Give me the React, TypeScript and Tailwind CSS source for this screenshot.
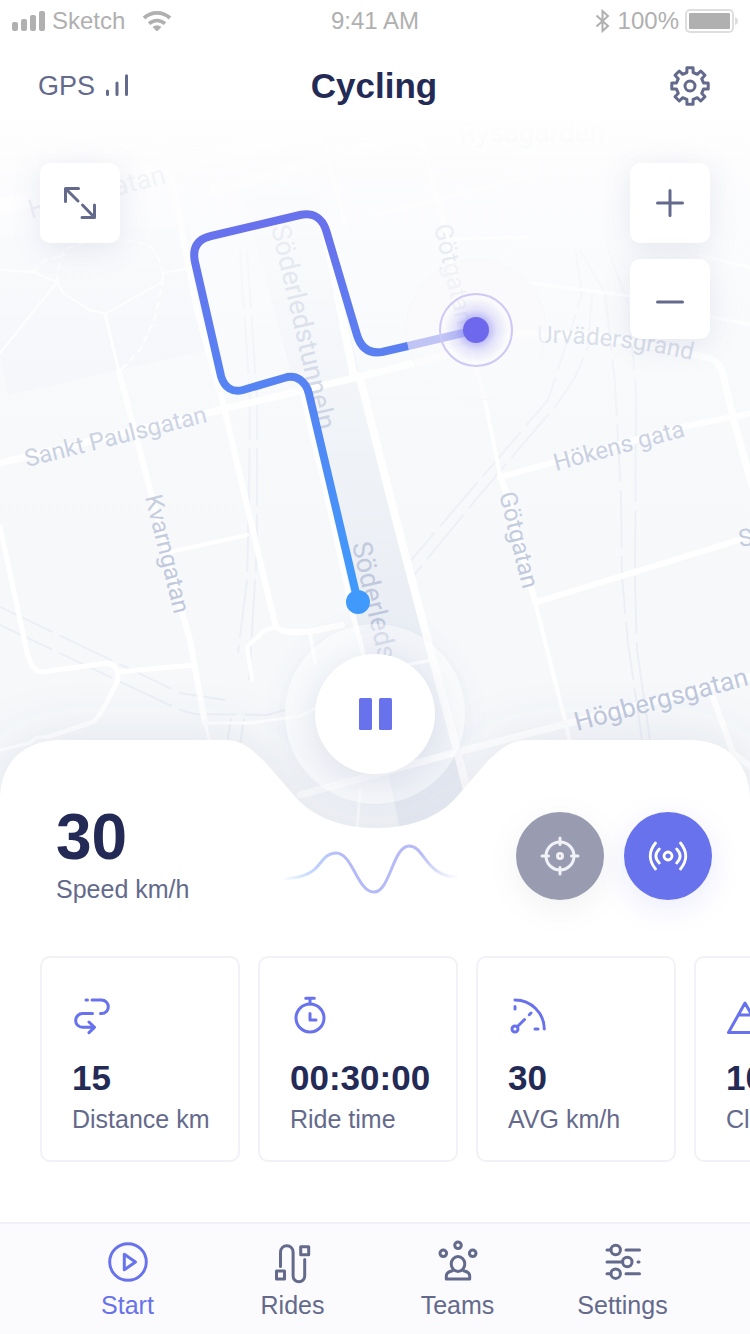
import React, { useState } from 'react';

const roads = [
  { w: 7, d: 'M0 463L207 413L375 373L438 357L518 333L600 336L688 353L712 359Q720 364 723 374L733 417L752 486' },
  { w: 6, d: 'M752 413L732 417L682 427L500 477' },
  { w: 4, d: 'M472 353L485 400L500 475' },
  { w: 6, d: 'M500 475L507 495L535 602' },
  { w: 4, d: 'M535 602L565 720L570 742' },
  { w: 5, d: 'M415 118L442 217L472 353' },
  { w: 6, d: 'M537 602L752 536' },
  { w: 7, d: 'M300 795L402 767L465 750L573 722L752 676' },
  { w: 6, d: 'M713 697L733 753L752 768' },
  { w: 8, d: 'M325 230L353 373L360 378L391 500L410 573L433 660L457 750L467 790' },
  { w: 5, d: 'M302 393L327 497L353 615L366 665' },
  { w: 6, d: 'M168 160L197 310L223 403L245 497L275 624Q278 632 290 632L308 632L342 625' },
  { w: 4, d: 'M273 628Q262 630 258 637L247 647L252 680M310 633L315 662M170 552L247 535' },
  { w: 3, d: 'M105 314L119 372' },
  { w: 6, d: 'M119 372L122 383L152 497L182 613L190 640L205 723' },
  { w: 5, d: 'M0 527L25 643Q30 672 42 672L107 663Q118 664 118 680Q100 718 93 722L48 737' },
  { w: 5, d: 'M118 672L193 665' },
  { w: 3, d: 'M0 750L30 743L37 737L48 737M203 723L250 723L300 716L400 666L433 660M205 723L210 742' },
  { w: 2, d: 'M0 270L33 272L57 282L63 293L90 310L105 314L162 282L163 273L190 268M57 282L0 353' },
  { w: 16, d: 'M0 207L180 163L375 118' },
  { w: 10, d: 'M215 190L750 40' },
  { w: 3, d: 'M0 204L180 158M22 118L38 170M155 118L165 158M325 150L345 225M375 215L530 176M445 239L527 237M530 283L630 296M700 255L752 268M700 315L752 325M360 790L357 830' },
];

const rails = [
  'M240 250L250 397L249 497L247 580L238 653',
  'M247 250L257 397L257 550L249 680',
  'M605 293L615 383L621 497L622 577L628 643L642 740',
  'M608 250L628 303L636 390L635 583L637 650L650 740',
  'M575 250L582 293L573 323L548 400L465 497L407 565L360 625',
  'M580 250L605 293M592 293L588 347L575 377L558 403L478 497L410 580L360 640',
  'M0 607L180 693L225 700M0 625L180 710L195 714L267 715L285 710',
  'M231 718L227 745M244 718L240 745',
];

const labels = [
  { text: 'Hornsgatan', x: 31, y: 219, angle: -15, size: 27 },
  { text: 'Ryssgården', x: 459, y: 142, angle: 0, size: 28 },
  { text: 'Söderledstunneln', x: 271, y: 227, angle: 77, size: 27 },
  { text: 'Götgatan', x: 434, y: 226, angle: 77, size: 25 },
  { text: 'Sankt Paulsgatan', x: 27, y: 467, angle: -14, size: 24 },
  { text: 'Hökens gata', x: 556, y: 471, angle: -15, size: 24 },
  { text: 'Kvarngatan', x: 145, y: 497, angle: 76, size: 24 },
  { text: 'Götgatan', x: 499, y: 494, angle: 76, size: 24 },
  { text: 'Söderleds', x: 352, y: 544, angle: 77, size: 27 },
  { text: 'Högbergsgatan', x: 577, y: 731, angle: -15, size: 26 },
  { text: 'S', x: 740, y: 547, angle: -10, size: 24 },
];

const route =
  'M358 602L309 394C306 381 296 374 284 378L243 390C232 393 224 387 221 376L195 262C192 248 197 239 211 236L300 215C313 212 322 218 326 230L357 335C361 348 369 354 382 352L408 346';

const sheet =
  'M0 800C0 762 25 740 60 740H225C243 740 254 751 266 763L298 800C318 820 346 828 376 828C406 828 434 820 454 800L486 763C498 751 509 740 527 740H690C725 740 750 762 750 800V900H0Z';

function CityMap() {
  return (
    <svg
      className="absolute inset-0 h-full w-full"
      viewBox="0 118 750 712"
      preserveAspectRatio="xMidYMin slice"
      fill="none"
      aria-hidden="true"
    >
      <defs>
        <linearGradient id="fade" x1="0" y1="118" x2="0" y2="600" gradientUnits="userSpaceOnUse">
          <stop offset="0" stopColor="#fdfdfe" stopOpacity="0.94" />
          <stop offset="0.2" stopColor="#fdfdfe" stopOpacity="0.76" />
          <stop offset="0.45" stopColor="#fcfdfd" stopOpacity="0.44" />
          <stop offset="0.7" stopColor="#fbfcfc" stopOpacity="0.16" />
          <stop offset="1" stopColor="#fbfcfc" stopOpacity="0" />
        </linearGradient>
        <linearGradient id="top" x1="0" y1="118" x2="0" y2="170" gradientUnits="userSpaceOnUse">
          <stop offset="0" stopColor="#fff" stopOpacity="0.8" />
          <stop offset="1" stopColor="#fff" stopOpacity="0" />
        </linearGradient>
        <linearGradient id="tunnel" x1="0" y1="180" x2="0" y2="560" gradientUnits="userSpaceOnUse">
          <stop offset="0" stopColor="#f3f5f9" />
          <stop offset="1" stopColor="#ebeff5" />
        </linearGradient>
        <linearGradient id="route" x1="0" y1="230" x2="0" y2="590" gradientUnits="userSpaceOnUse">
          <stop offset="0" stopColor="#6872ed" />
          <stop offset="1" stopColor="#3f9afb" />
        </linearGradient>
        <radialGradient id="glow">
          <stop offset="0.3" stopColor="#6c66ee" stopOpacity="0.5" />
          <stop offset="0.65" stopColor="#6c66ee" stopOpacity="0.15" />
          <stop offset="1" stopColor="#6c66ee" stopOpacity="0" />
        </radialGradient>
        <filter id="soft" x="-20%" y="-60%" width="140%" height="220%">
          <feGaussianBlur stdDeviation="28" />
        </filter>
        <path id="urvaders" d="M537 343Q620 342 700 362" />
      </defs>

      <rect y="118" width="750" height="712" fill="#f6f8fa" />
      <path d="M0 235L190 225L208 350L8 395L0 355Z" fill="#f2f4f9" />
      <path d="M240 190L315 180L360 375L391 500L433 660L475 830L400 830L366 665L327 497L302 393L290 370L258 250Z" fill="url(#tunnel)" />
      {rails.map((d) => (
        <path key={d} d={d} stroke="#eceff6" strokeWidth="2" strokeDasharray="58 8" />
      ))}
      {roads.map(({ w, d }) => (
        <path key={d} d={d} stroke="#fff" strokeWidth={w} strokeLinejoin="round" strokeLinecap="round" />
      ))}
      <path
        d="M57 282L60 257L68 248Q110 232 150 246Q163 260 163 282L155 318L140 350L119 372M33 272L45 260L65 255"
        stroke="#fff"
        strokeWidth="2"
        strokeDasharray="8 4"
      />

      <g fill="#bfc8dc" fontFamily="Roboto, 'Liberation Sans', sans-serif">
        {labels.map(({ text, x, y, angle, size }) => (
          <text key={`${text}-${y}`} transform={`translate(${x} ${y}) rotate(${angle})`} fontSize={size}>
            {text}
          </text>
        ))}
        <text fontSize="24">
          <textPath href="#urvaders">Urvädersgränd</textPath>
        </text>
      </g>
      <rect y="118" width="750" height="712" fill="url(#fade)" />
      <rect y="118" width="750" height="60" fill="url(#top)" />

      <circle cx="476" cy="330" r="70" fill="#fafafc" fillOpacity="0.6" stroke="#f8f8fb" />
      <circle cx="476" cy="330" r="32" fill="url(#glow)" />
      <path d="M408 346L476 330" stroke="#6872ed" strokeOpacity="0.4" strokeWidth="8" />
      <circle cx="476" cy="330" r="36" stroke="#cdc8f6" strokeWidth="2" />
      <circle cx="476" cy="330" r="13" fill="#6e69ec" />
      <path d={route} stroke="url(#route)" strokeWidth="8" />
      <circle cx="358" cy="602" r="12" fill="#3f9afb" />

      <path d={sheet} fill="#5a6496" fillOpacity="0.14" filter="url(#soft)" />
      <path d={sheet} fill="#fff" />
    </svg>
  );
}

function StatusBar() {
  return (
    <div className="grid h-[42px] grid-cols-[1fr_auto_1fr] items-center px-3 text-2xl leading-8 text-[#b0b0b0]">
      <div className="flex items-center gap-[7px]">
        <svg width="33" height="20" fill="currentColor" aria-hidden="true">
          <rect y="11" width="6" height="9" rx="2" />
          <rect x="9" y="8" width="6" height="12" rx="2" />
          <rect x="18" y="4" width="6" height="16" rx="2" />
          <rect x="27" width="6" height="20" rx="2" />
        </svg>
        <span>Sketch</span>
        <svg className="ml-2.5" width="30" height="20" viewBox="0 0 30 20" aria-hidden="true">
          <g fill="none" stroke="currentColor" strokeWidth="3.8">
            <path d="M2 7C9.500 .2 20.500 .2 28 7" />
            <path d="M7 12.600C12 8.500 18 8.500 23 12.600" />
          </g>
          <path d="M10.500 16Q15 12.500 19.500 16L15 20.500Z" fill="currentColor" />
        </svg>
      </div>
      <span>9:41 AM</span>
      <div className="flex items-center justify-end">
        <svg className="mr-2" width="15" height="24" viewBox="0 0 15 24" fill="none" stroke="currentColor" strokeWidth="2" aria-hidden="true">
          <path d="M1.500 6.500L13 17L7.500 22V2L13 7L1.500 17.500" />
        </svg>
        <span>100%</span>
        <svg className="ml-1.5" width="53" height="24" viewBox="0 0 53 24" aria-hidden="true">
          <rect x="1" y="1" width="47" height="22" rx="4" fill="none" stroke="#dedede" strokeWidth="2" />
          <rect x="4" y="4" width="41" height="16" rx="1" fill="currentColor" />
          <path d="M50 8Q53 9 53 12T50 16Z" fill="#dedede" />
        </svg>
      </div>
    </div>
  );
}

function Header() {
  return (
    <header className="pt-3">
      <div className="grid h-16 grid-cols-[1fr_auto_1fr] items-center pr-10 pl-[38px]">
        <div className="flex items-center gap-2.5 text-[27px] leading-8 text-[#646a8b]">
          <span>GPS</span>
          <svg width="24" height="24" fill="none" stroke="currentColor" strokeWidth="3" strokeLinecap="round" aria-hidden="true">
            <path d="M2.500 17V20.500M12 9V20.500M21.500 1.800V20.500" />
          </svg>
        </div>
        <h1 className="text-[35px] leading-[44px] font-bold text-[#232a55]">Cycling</h1>
        <button type="button" aria-label="Preferences" className="justify-self-end text-[#646a8b]">
          <svg width="40" height="40" viewBox="-20 -20 40 40" fill="none" stroke="currentColor" strokeWidth="3" strokeLinejoin="round">
            <path d="M-3.100 -13.500V-18.200H3.100V-13.500L7.300 -11.700L10.700 -15L15 -10.700L11.700 -7.300L13.500 -3.100H18.200V3.100H13.500L11.700 7.300L15 10.700L10.700 15L7.300 11.700L3.100 13.500V18.200H-3.100V13.500L-7.300 11.700L-10.700 15L-15 10.700L-11.700 7.300L-13.500 3.100H-18.200V-3.100H-13.500L-11.700 -7.300L-15 -10.700L-10.700 -15L-7.300 -11.700Z" />
            <circle r="5" />
          </svg>
        </button>
      </div>
    </header>
  );
}

interface MapButtonProps {
  label: string;
  path: string;
}

function MapButton({ label, path }: MapButtonProps) {
  return (
    <button
      type="button"
      aria-label={label}
      className="flex size-20 items-center justify-center rounded-[10px] bg-white text-[#646a8b] shadow-[0_6px_30px_rgba(90,100,160,0.13)]"
    >
      <svg width="40" height="40" fill="none" stroke="currentColor" strokeWidth="3" strokeLinecap="round" strokeLinejoin="round">
        <path d={path} />
      </svg>
    </button>
  );
}

const stats = [
  {
    value: '15',
    label: 'Distance km',
    icon: (
      <path d="M14 4H15.500M20 4H29.500A6.800 6.800 0 0 1 29.500 17.600H28.500M20.500 17.600H10.500A6.800 6.800 0 0 0 10.500 31.300H22M17 26L22.500 31.300L17 36.600" />
    ),
  },
  {
    value: '00:30:00',
    label: 'Ride time',
    icon: (
      <>
        <circle cx="20" cy="22" r="14" />
        <path d="M15.700 2.200H24.300M20 2.200V8M20 17.500V24H26" />
      </>
    ),
  },
  {
    value: '30',
    label: 'AVG km/h',
    icon: (
      <>
        <path d="M7 4A29.300 29.300 0 0 1 36.300 33M9.500 30.500L16.500 23.500M7 10.500V13M21.300 18.700L23 17M27 33H30" />
        <circle cx="7" cy="33" r="3" />
      </>
    ),
  },
  {
    value: '100',
    label: 'Climb m',
    icon: <path d="M19 7L2.500 36.500H35.500ZM12.500 19H25.500" />,
  },
];

const tabs = [
  {
    name: 'Start',
    icon: (
      <>
        <circle cx="20" cy="20" r="18.300" />
        <path d="M16.300 12.300V27.700L27.500 20Z" />
      </>
    ),
  },
  {
    name: 'Rides',
    icon: (
      <>
        <path d="M3.500 29H11.500V37H3.500ZM27.700 4.700H35.700V12.700H27.700Z" />
        <path d="M7.500 24.500V10A6.300 6.300 0 0 1 20.100 10V34A5.800 5.800 0 0 0 31.700 34V17.500" />
      </>
    ),
  },
  {
    name: 'Teams',
    icon: (
      <>
        <circle cx="20" cy="3.300" r="3.300" />
        <circle cx="5.300" cy="11.300" r="3.300" />
        <circle cx="34.700" cy="11.300" r="3.300" />
        <ellipse cx="20" cy="22" rx="6.800" ry="7.600" />
        <path d="M14.500 28.700Q8.300 30 8.300 34V37H31.700V34Q31.700 30 25.500 28.700" />
      </>
    ),
  },
  {
    name: 'Settings',
    icon: (
      <>
        <circle cx="12.700" cy="8" r="4.700" />
        <circle cx="24.300" cy="20" r="4.700" />
        <circle cx="12.700" cy="31.700" r="4.700" />
        <path d="M4 8H7.500M23 8H36.500M4 20H19M35 20H36M4 31.700H7.500M23 31.700H36.500" />
      </>
    ),
  },
];

export default function App() {
  const [active, setActive] = useState('Start');

  return (
    <div className="flex min-h-screen flex-col overflow-hidden bg-white font-['Liberation_Sans',Arial,sans-serif]">
      <StatusBar />
      <Header />

      <section aria-label="Map" className="relative h-[712px]">
        <CityMap />
        <div className="relative flex items-start justify-between px-10 pt-[45px]">
          <MapButton label="Expand map" path="M18.500 5.500H5.500V18.500M5.500 5.500L18 18M22.500 22L34.500 34.500M34.500 22V34.500H22" />
          <div className="flex flex-col gap-4">
            <MapButton label="Zoom in" path="M7.500 20H32.500M20 7.500V32.500" />
            <MapButton label="Zoom out" path="M7.500 23H32.500" />
          </div>
        </div>
      </section>

      <main className="relative -mt-[90px] flex-1 pt-[67px] pb-[60px]">
        <div className="absolute -top-[116px] left-1/2 -translate-x-1/2 rounded-full bg-white/40 p-[30px] shadow-[0_4px_30px_rgba(90,100,160,0.06)]">
          <button
            type="button"
            aria-label="Pause ride"
            className="flex size-[120px] items-center justify-center rounded-full bg-white text-[#6872ec] shadow-[0_8px_40px_rgba(90,100,160,0.18)]"
          >
            <svg width="33" height="32" fill="currentColor">
              <rect width="13" height="32" rx="1.500" />
              <rect x="20" width="13" height="32" rx="1.500" />
            </svg>
          </button>
        </div>

        <div className="grid grid-cols-[1fr_auto_1fr] items-center px-[38px]">
          <div className="flex flex-col gap-1.5 pl-[18px]">
            <span className="text-[64px] leading-[60px] font-bold text-[#232a55]">30</span>
            <span className="text-[25px] leading-8 text-[#646a8b]">Speed km/h</span>
          </div>
          <svg width="186" height="80" fill="none" strokeWidth="3" aria-hidden="true">
            <defs>
              <linearGradient id="wave" x1="0" y1="0" x2="178" y2="0" gradientUnits="userSpaceOnUse">
                <stop offset="0" stopColor="#a9d0fd" stopOpacity="0" />
                <stop offset="0.2" stopColor="#bccffc" />
                <stop offset="0.35" stopColor="#b4b9f8" />
                <stop offset="0.78" stopColor="#b7bbf7" />
                <stop offset="1" stopColor="#d5d8fb" stopOpacity="0" />
              </linearGradient>
            </defs>
            <path d="M0 63C12 62 24 61 33 53C41 45 44 37 54 37C71 37 75 76 92 76C108 76 111 30 127 30C143 30 143 61 176 61" stroke="url(#wave)" />
          </svg>
          <div className="flex gap-5 justify-self-end">
            <button
              type="button"
              aria-label="Centre on me"
              className="flex size-[88px] items-center justify-center rounded-full bg-[#999bb1] text-[#f1f2f7] shadow-[0_8px_30px_rgba(120,120,140,0.10)]"
            >
              <svg width="40" height="40" viewBox="-20 -20 40 40" fill="none" stroke="currentColor" strokeWidth="3" strokeLinecap="round">
                <circle r="14" />
                <circle r="2.500" />
                <path d="M0 -18V-11.500M0 18V11.500M-18 0H-11.500M18 0H11.500" />
              </svg>
            </button>
            <button
              type="button"
              aria-label="Share live location"
              className="flex size-[88px] items-center justify-center rounded-full bg-[#6872ec] text-white shadow-[0_8px_30px_rgba(104,114,236,0.14)]"
            >
              <svg width="40" height="40" viewBox="-20 -20 40 40" fill="none" stroke="currentColor" strokeWidth="2.800" strokeLinecap="round">
                <circle r="4" />
                <path d="M-8.700 -7Q-15.500 0 -8.700 7M8.700 -7Q15.500 0 8.700 7M-12.500 -13Q-23 0 -12.500 13M12.500 -13Q23 0 12.500 13" />
              </svg>
            </button>
          </div>
        </div>

        <ul className="mt-[51px] flex gap-[18px] overflow-x-auto px-10 [scrollbar-width:none]">
          {stats.map(({ value, label, icon }) => (
            <li key={label} className="w-[200px] shrink-0 rounded-[10px] border-2 border-[#f1f1f7] px-[30px] pt-[38px] pb-[26px]">
              <svg
                className="text-[#6872ec]"
                width="40"
                height="40"
                fill="none"
                stroke="currentColor"
                strokeWidth="3"
                strokeLinecap="round"
                strokeLinejoin="round"
                aria-hidden="true"
              >
                {icon}
              </svg>
              <p className="mt-5 text-[35px] leading-[44px] font-bold text-[#232a55]">{value}</p>
              <p className="mt-1 text-[25px] leading-[30px] whitespace-nowrap text-[#646a8b]">{label}</p>
            </li>
          ))}
        </ul>
      </main>

      <nav className="grid grid-cols-4 border-t-2 border-[#f0f0f6] bg-[#fbfbfd] px-[45px] pt-[18px] pb-3.5">
        {tabs.map(({ name, icon }) => (
          <button
            key={name}
            type="button"
            onClick={() => setActive(name)}
            className={`flex flex-col items-center gap-2 text-[25px] leading-[30px] ${active === name ? 'text-[#6872ec]' : 'text-[#646a8b]'}`}
          >
            <svg
              className="overflow-visible"
              width="40"
              height="40"
              fill="none"
              stroke="currentColor"
              strokeWidth="3"
              strokeLinecap="round"
              strokeLinejoin="round"
              aria-hidden="true"
            >
              {icon}
            </svg>
            {name}
          </button>
        ))}
      </nav>
    </div>
  );
}
